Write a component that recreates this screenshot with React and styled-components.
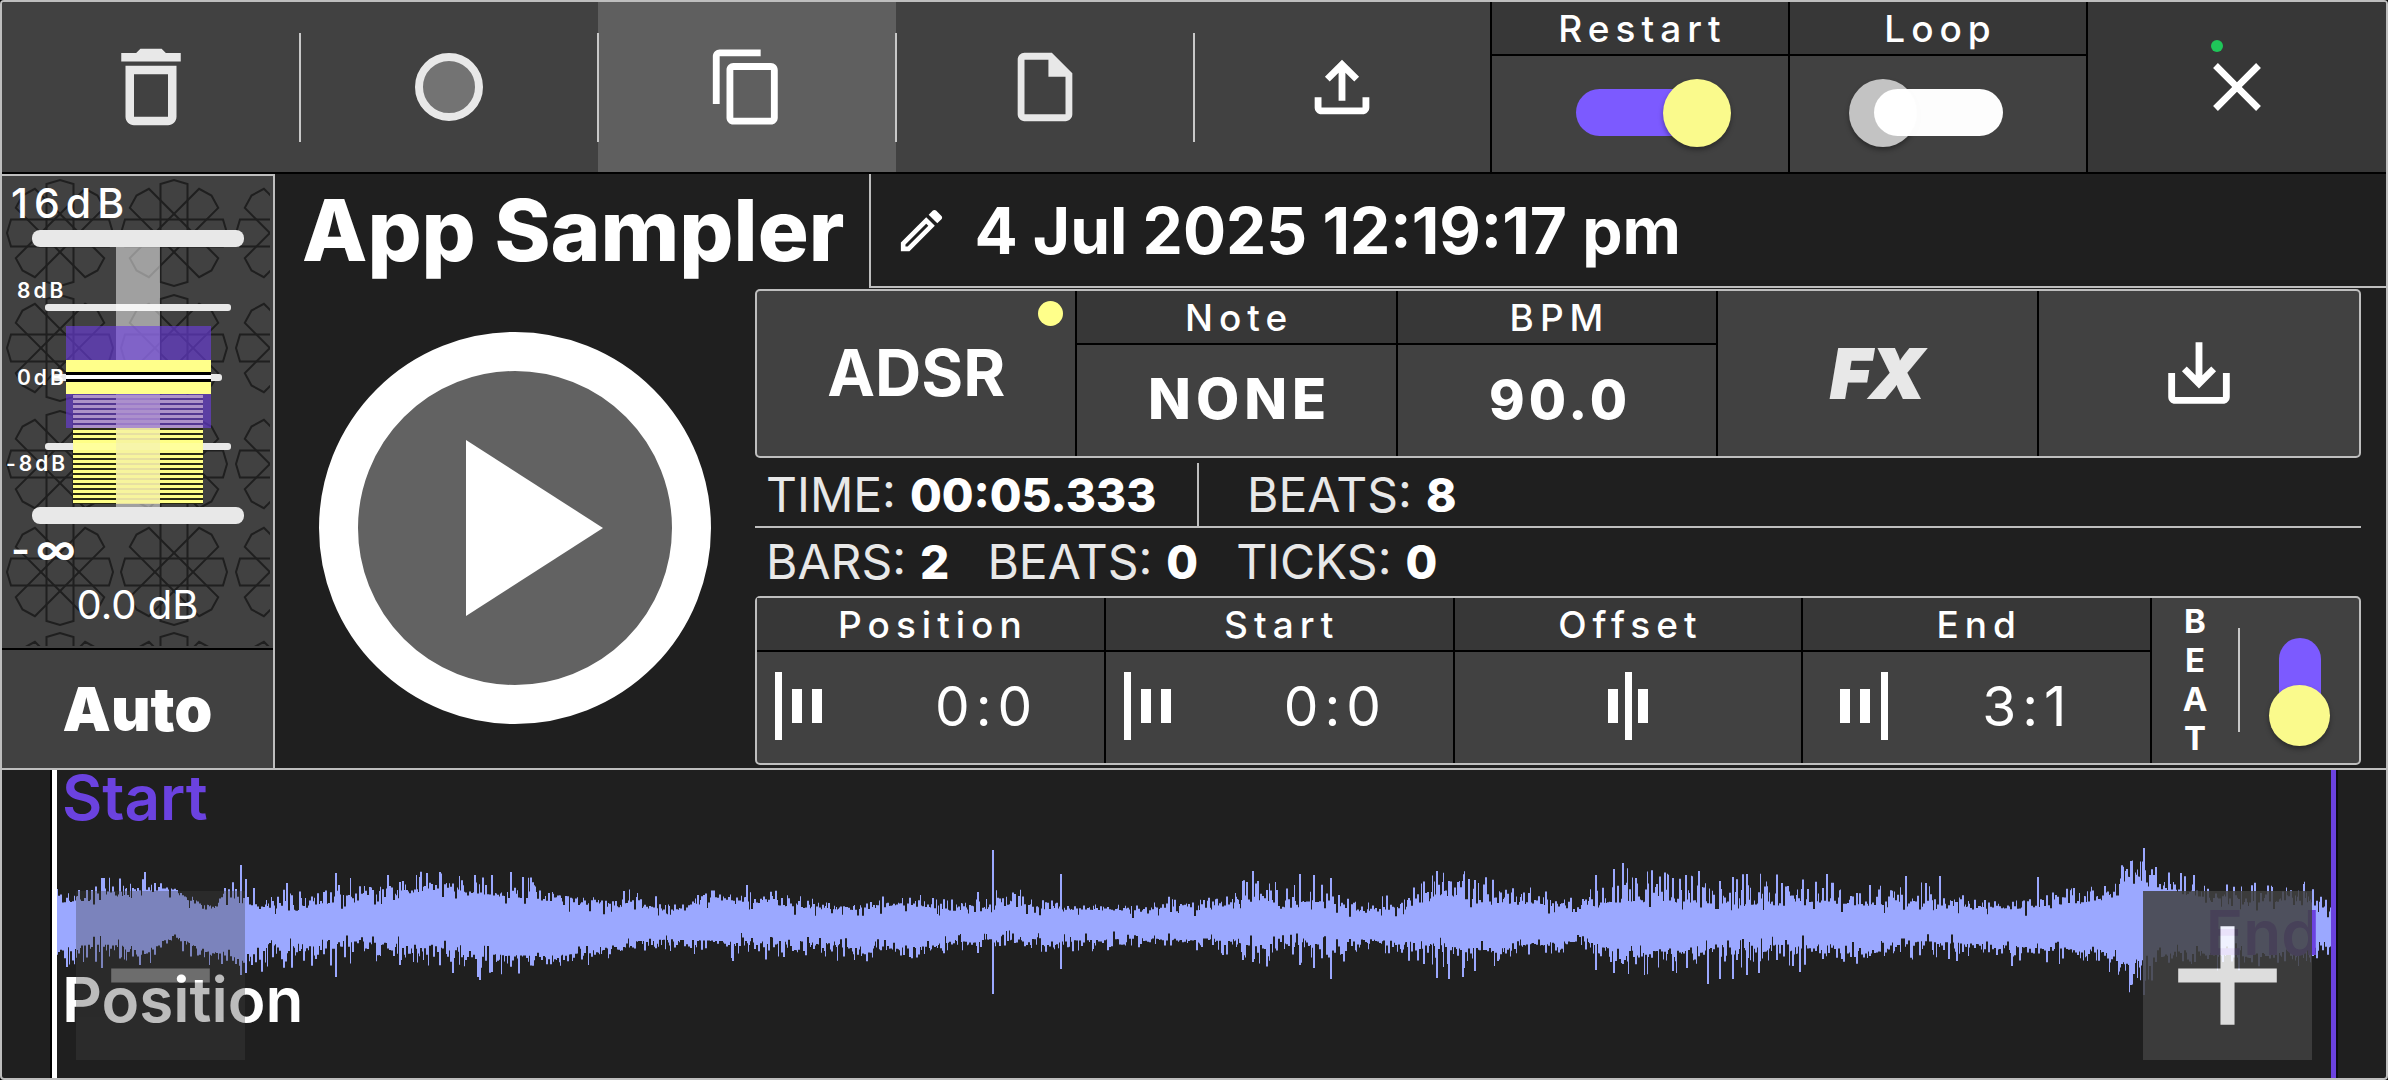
import React from "react";
import styled, { createGlobalStyle, css } from "styled-components";

const c = {
  bg: "#1f1f1f",
  cell: "#414141",
  head: "#373737",
  line: "#bebebe",
  soft: "#e8e8e8",
  purple: "#7c5aff",
  deep: "#6b42e0",
  yellow: "#fafa8c",
  wave: "#9ba8ff",
};

const Global = createGlobalStyle`
  *, *::before, *::after { box-sizing: border-box; }
  body {
    margin: 0;
    background: #000;
    color: #fff;
    font-family: Inter, "Liberation Sans", sans-serif;
  }
  button, input {
    margin: 0;
    padding: 0;
    border: 0;
    background: none;
    color: inherit;
    font-family: inherit;
  }
  svg { display: block; flex: none; }
`;

const Frame = styled.main`
  display: flex;
  flex-direction: column;
  min-height: 100vh;
  border: 2px solid ${c.line};
  border-radius: 4px;
  background: ${c.bg};
  overflow: hidden;
`;

/* ---------- toolbar ---------- */

const Toolbar = styled.header`
  display: grid;
  grid-template-columns: repeat(8, 1fr);
  height: 172px;
  background: ${c.cell};
  border-bottom: 2px solid #000;
`;

const ToolButton = styled.button`
  position: relative;
  display: flex;
  align-items: center;
  justify-content: center;
  background: ${(p) => (p.$active ? "#5f5f5f" : "transparent")};
  color: ${(p) => (p.$soft ? c.soft : "#fff")};
  border-right: ${(p) => (p.$edge ? "2px solid #000" : "0")};
  ${(p) =>
    p.$divided &&
    css`
      &::after {
        content: "";
        position: absolute;
        z-index: 1;
        right: -1px;
        top: 31px;
        bottom: 30px;
        width: 2px;
        background: #c8c8c8;
      }
    `}
`;

const CloseButton = styled(ToolButton)`
  background: ${c.head};
`;

const IconBadge = styled.span`
  position: relative;
  &::after {
    content: "";
    position: absolute;
    left: 15px;
    top: -6px;
    width: 12px;
    height: 12px;
    border-radius: 50%;
    background: #1fc659;
  }
`;

const Field = styled.div`
  position: relative;
  display: grid;
  grid-template-rows: 52px 1fr;
  min-width: 0;
  border-right: 2px solid #000;
`;

const FieldHead = styled.label`
  padding-left: 5px;
  background: ${c.head};
  font-size: 37px;
  font-weight: 500;
  line-height: 53px;
  letter-spacing: 6px;
  text-align: center;
`;

const FieldBody = styled.div`
  display: flex;
  align-items: center;
  justify-content: ${(p) => (p.$start ? "flex-start" : "center")};
  padding-left: ${(p) => p.$inset || 0}px;
  padding-bottom: 3px;
  min-width: 0;
  border-top: 2px solid #000;
  isolation: isolate;
`;

const Switch = styled.input`
  appearance: none;
  position: relative;
  width: 129px;
  height: 47px;
  border-radius: 24px;
  background: rgba(255, 255, 255, 0.99);
  &::before {
    content: "";
    position: absolute;
    z-index: -1;
    left: -25px;
    top: -10px;
    width: 68px;
    height: 68px;
    border-radius: 50%;
    background: #c3c3c3;
    box-shadow: 0 3px 5px rgba(0, 0, 0, 0.35);
  }
  &:checked {
    background: ${c.purple};
  }
  &:checked::before {
    z-index: 1;
    left: 87px;
    background: ${c.yellow};
  }
`;

const VerticalSwitch = styled(Switch)`
  width: 42px;
  height: 84px;
  &:checked::before {
    left: -10px;
    top: 47px;
    width: 61px;
    height: 61px;
  }
`;

/* ---------- middle ---------- */

const Middle = styled.section`
  display: grid;
  grid-template-columns: 273px 1fr;
  border-bottom: 2px solid ${c.line};
`;

const Side = styled.aside`
  display: flex;
  flex-direction: column;
  border-top: 2px solid ${c.line};
  border-right: 2px solid ${c.line};
  background: ${c.cell};
`;

const Meter = styled.div`
  position: relative;
  height: 472px;
`;

const MeterRange = styled.input`
  position: absolute;
  left: 30px;
  top: 54px;
  width: 212px;
  height: 294px;
  opacity: 0;
  writing-mode: vertical-lr;
  direction: rtl;
`;

const Mark = styled.span`
  position: absolute;
  left: ${(p) => (p.$far ? 4 : p.$big ? 9 : 15)}px;
  top: ${(p) => p.$y}px;
  font-size: ${(p) => (p.$big ? 41 : 21)}px;
  line-height: ${(p) => (p.$big ? 48 : 24)}px;
  font-weight: ${(p) => p.$weight || 600};
  letter-spacing: ${(p) => (p.$big ? 6 : 3)}px;
  white-space: nowrap;
`;

const MeterValue = styled.output`
  position: absolute;
  left: 0;
  right: 0;
  top: 405px;
  font-size: 40px;
  line-height: 48px;
  text-align: center;
`;

const AutoButton = styled.button`
  height: 120px;
  border-top: 2px solid #000;
  font-size: 61px;
  font-weight: 900;
`;

const Content = styled.div`
  display: flex;
  flex-direction: column;
  min-width: 0;
`;

const TitleRow = styled.div`
  display: flex;
  height: 114px;
`;

const AppTitle = styled.h1`
  margin: 0;
  padding: 0 25px 0 27px;
  font-size: 85px;
  line-height: 114px;
  font-weight: 800;
  white-space: nowrap;
`;

const NameButton = styled.button`
  display: flex;
  align-items: center;
  flex: 1;
  gap: 25px;
  padding-left: 23px;
  border-left: 2px solid ${c.line};
  border-bottom: 2px solid ${c.line};
  font-size: 64px;
  font-weight: 700;
  white-space: nowrap;
`;

const Deck = styled.div`
  display: grid;
  grid-template-columns: 480px 1fr;
  padding-right: 25px;
`;

const PlayArea = styled.div`
  display: flex;
  align-items: center;
  justify-content: center;
`;

const PlayButton = styled.button`
  display: flex;
  align-items: center;
  justify-content: center;
  width: 392px;
  height: 392px;
  border: 39px solid #fff;
  border-radius: 50%;
  background: #626262;
`;

const Controls = styled.div`
  padding: 1px 0 3px;
  min-width: 0;
`;

const Panel = styled.div`
  display: grid;
  grid-template-columns: ${(p) => p.$columns};
  height: 169px;
  border: 2px solid ${c.line};
  border-radius: 5px;
  background: ${c.cell};
`;

const PanelButton = styled.button`
  position: relative;
  display: flex;
  align-items: center;
  justify-content: center;
  padding-bottom: 2px;
  border-right: ${(p) => (p.$last ? "0" : "2px solid #000")};
  font-size: 64px;
  font-weight: 700;
`;

const ActiveDot = styled.i`
  position: absolute;
  right: 12px;
  top: 10px;
  width: 25px;
  height: 25px;
  border-radius: 50%;
  background: #ffff8a;
`;

const FxMark = styled.span`
  color: ${c.soft};
  font-size: 68px;
  font-style: italic;
  font-weight: 900;
  -webkit-text-stroke: 2px ${c.soft};
`;

const ValueButton = styled.button`
  width: 100%;
  height: 100%;
  padding-left: 6px;
  font-size: 56px;
  font-weight: 800;
  letter-spacing: 5px;
`;

const ValueInput = styled.input`
  width: 100%;
  min-width: 0;
  padding-left: 6px;
  font-size: 54px;
  font-weight: 800;
  letter-spacing: 4px;
  text-align: center;
`;

const PointInput = styled.input`
  flex: 1;
  min-width: 0;
  padding-left: ${(p) => p.$gap}px;
  font-size: 55px;
  font-weight: 400;
  letter-spacing: 6px;
`;

const InfoRow = styled.div`
  display: flex;
  align-items: center;
  gap: ${(p) => p.$gap || 0}px;
  height: ${(p) => p.$height}px;
  margin-top: ${(p) => p.$top || 0}px;
  padding-left: ${(p) => p.$inset || 0}px;
  border-bottom: ${(p) => (p.$ruled ? `2px solid ${c.line}` : "0")};
`;

const InfoSlot = styled.div`
  display: flex;
  align-items: center;
  height: 100%;
  width: ${(p) => (p.$wide ? "444px" : "auto")};
  padding-left: ${(p) => (p.$wide ? 11 : 48)}px;
  border-right: ${(p) => (p.$wide ? `2px solid ${c.line}` : "0")};
`;

const Info = styled.span`
  display: flex;
  align-items: baseline;
  gap: 14px;
  color: ${c.soft};
  font-size: 48px;
  line-height: 60px;
  white-space: nowrap;
  strong {
    color: #fff;
    font-size: 46px;
    font-weight: 800;
  }
`;

const BeatCell = styled.div`
  display: grid;
  grid-template-columns: 86px 1fr;
  align-items: center;
  padding-bottom: 2px;
`;

const BeatLabel = styled.label`
  display: flex;
  flex-direction: column;
  align-items: center;
  font-size: 33px;
  line-height: 39px;
  font-weight: 700;
`;

const BeatSwitch = styled.div`
  display: flex;
  align-items: center;
  justify-content: center;
  height: 104px;
  border-left: 2px solid #c8c8c8;
  isolation: isolate;
`;

/* ---------- waveform ---------- */

const WaveSection = styled.section`
  position: relative;
  flex: 1;
  display: flex;
  min-height: 308px;
  padding: 0 50px;
`;

const WaveTrack = styled.div`
  position: relative;
  flex: 1;
  min-width: 0;
  border-left: 5px solid #fff;
  border-right: 5px solid ${c.deep};
  box-shadow: -2px 0 #000, 2px 0 #0c0c14;
  svg {
    width: 100%;
    height: 308px;
  }
`;

const MarkerLabel = styled.span`
  position: absolute;
  font-size: 62px;
  line-height: 56px;
  font-weight: 600;
  color: ${c.deep};
`;

const StartLabel = styled(MarkerLabel)`
  left: 5px;
  top: 0;
`;

const PositionLabel = styled(MarkerLabel)`
  left: 5px;
  bottom: 50px;
  color: #fff;
`;

const EndLabel = styled(MarkerLabel)`
  right: 11px;
  bottom: 117px;
`;

const ZoomButton = styled.button`
  position: absolute;
  bottom: 18px;
  ${(p) => (p.$right ? "right: 74px;" : "left: 74px;")}
  width: 169px;
  height: 169px;
  background: ${c.cell};
  color: #fff;
  opacity: ${(p) => (p.$right ? 0.85 : 0.35)};
`;

/* ---------- drawings ---------- */

const paths = {
  trash:
    "M6 19c0 1.1.9 2 2 2h8c1.1 0 2-.9 2-2V7H6v12zM8 9h8v10H8V9zm7.5-5l-1-1h-5l-1 1H5v2h14V4h-3.5z",
  copy:
    "M16 1H4c-1.1 0-2 .9-2 2v14h2V3h12V1zm3 4H8c-1.1 0-2 .9-2 2v14c0 1.1.9 2 2 2h11c1.1 0 2-.9 2-2V7c0-1.1-.9-2-2-2zm0 16H8V7h11v14z",
  file:
    "M14 2H6c-1.1 0-1.99.9-1.99 2L4 20c0 1.1.89 2 1.99 2H18c1.1 0 2-.9 2-2V8l-6-6zM6 20V4h7v5h5v11H6z",
  upload:
    "M18 15v3H6v-3H4v3c0 1.1.9 2 2 2h12c1.1 0 2-.9 2-2v-3h-2zM7 9l1.41 1.41L11 7.83V16h2V7.83l2.59 2.58L17 9l-5-5-5 5z",
  close:
    "M19 6.41L17.59 5 12 10.59 6.41 5 5 6.41 10.59 12 5 17.59 6.41 19 12 13.41 17.59 19 19 17.59 13.41 12z",
  save:
    "M19 12v7H5v-7H3v7c0 1.1.9 2 2 2h14c1.1 0 2-.9 2-2v-7h-2zm-6 .67l2.59-2.58L17 11.5l-5 5-5-5 1.41-1.41L11 12.67V3h2z",
  edit:
    "M14.06 9.02l.92.92L5.92 19H5v-.92l9.06-9.06M17.66 3c-.25 0-.51.1-.7.29l-1.83 1.83 3.75 3.75 1.83-1.83c.39-.39.39-1.02 0-1.41l-2.34-2.34c-.2-.2-.45-.29-.71-.29zm-3.6 3.19L3 17.25V21h3.75L17.81 9.94l-3.75-3.75z",
  plus: "M19 13h-6v6h-2v-6H5v-2h6V5h2v6h6v2z",
  minus: "M19 13H5v-2h14v2z",
};

function Icon({ name, size = 82 }) {
  return (
    <svg width={size} height={size} viewBox="0 0 24 24" fill="currentColor" aria-hidden="true">
      <path d={paths[name]} />
    </svg>
  );
}

function RecordIcon() {
  return (
    <svg width="68" height="68" viewBox="0 0 68 68" aria-hidden="true">
      <circle cx="34" cy="34" r="30" fill="#737373" stroke={c.soft} strokeWidth="8" />
    </svg>
  );
}

/* One tall cursor line and two short bars; `bars` gives [x, width, tall]. */
function PointIcon({ bars }) {
  return (
    <svg width="48" height="68" viewBox="0 0 48 68" fill="#fff" aria-hidden="true">
      {bars.map(([x, w, tall]) => (
        <rect key={x} x={x} width={w} y={tall ? 0 : 17} height={tall ? 68 : 34} />
      ))}
    </svg>
  );
}

const lead = [[0, 7, true], [17, 10], [37, 10]];
const mid = [[4, 10], [21, 7, true], [34, 10]];
const tail = [[0, 10], [20, 10], [41, 7, true]];

const petal = "M-49 -13.5H49L53 0L49 13.5H-49L-53 0Z";

function MeterArt() {
  const rosettes = [];
  [58, 172, 287].forEach((x) =>
    [57, 172, 288, 396, 510].forEach((y) =>
      [0, 45, 90, 135].forEach((a) =>
        rosettes.push(
          <path key={`${x}-${y}-${a}`} d={petal} transform={`translate(${x} ${y}) rotate(${a})`} />
        )
      )
    )
  );
  const stripes = Array.from({ length: 22 }, (_, i) => 219 + i * 5);
  return (
    <svg width="271" height="472" viewBox="0 0 271 472" aria-hidden="true">
      <defs>
        <clipPath id="meter-clip">
          <rect width="268" height="470" />
        </clipPath>
      </defs>
      <g clipPath="url(#meter-clip)" fill="none" stroke="#1f1f1f" strokeWidth="2">
        {rosettes}
      </g>
      <g fill={c.soft}>
        <rect x="43" y="128" width="186" height="7" rx="3" />
        <rect x="51" y="198" width="169" height="7" rx="3" />
        <rect x="43" y="267" width="186" height="7" rx="3" />
      </g>
      <rect x="114" y="70" width="44" height="262" fill="#fff" opacity="0.5" />
      <rect x="71" y="219" width="130" height="109" fill="#2a2a12" />
      <rect x="114" y="219" width="44" height="109" fill="#e4dc8c" />
      <g fill="#ffff86">
        {stripes.map((y) => (
          <rect key={y} x="71" y={y} width="130" height="3" />
        ))}
      </g>
      <rect x="71" y="267" width="130" height="7" fill="#ffff9c" />
      <rect x="114" y="219" width="44" height="109" fill="#ece6c0" opacity="0.4" />
      <rect x="64" y="150" width="145" height="102" fill="#6c3ee0" opacity="0.62" />
      <g fill="#b49ad0" opacity="0.6">
        {stripes.slice(0, 7).map((y) => (
          <rect key={y} x="71" y={y} width="130" height="3" />
        ))}
      </g>
      <rect x="64" y="184" width="145" height="34" fill="#ffff8a" />
      <rect x="64" y="196" width="145" height="10" fill="#000" />
      <rect x="64" y="199" width="145" height="4" fill="#fff" />
      <g fill={c.soft}>
        <rect x="30" y="54" width="212" height="17" rx="8" />
        <rect x="30" y="331" width="212" height="17" rx="8" />
      </g>
    </svg>
  );
}

/* Envelope: x, then solid and peak height above and below the centre line. */
const envelope = [
  [57, 20, 32, 25, 37], [102, 23, 37, 20, 37], [150, 32, 40, 28, 36], [170, 33, 36, 12, 18],
  [204, 13, 20, 26, 37], [240, 20, 37, 36, 47], [275, 13, 30, 23, 37], [326, 20, 35, 23, 37],
  [357, 22, 38, 18, 32], [434, 33, 46, 23, 37], [470, 30, 40, 30, 47], [535, 23, 38, 33, 43],
  [586, 17, 22, 30, 38], [637, 15, 28, 18, 24], [673, 13, 18, 16, 24], [724, 23, 35, 18, 32],
  [800, 15, 23, 18, 30], [851, 13, 18, 22, 32], [912, 18, 27, 25, 34], [953, 12, 19, 18, 24],
  [1014, 18, 32, 15, 24], [1065, 13, 18, 18, 25], [1147, 12, 16, 15, 22], [1177, 17, 25, 17, 24],
  [1208, 13, 22, 15, 24], [1254, 22, 40, 21, 37], [1290, 21, 32, 18, 32], [1320, 21, 40, 21, 38],
  [1366, 10, 16, 16, 27], [1422, 18, 35, 20, 32], [1463, 24, 44, 25, 40], [1504, 19, 35, 25, 37],
  [1534, 19, 31, 20, 27], [1580, 13, 21, 18, 27], [1600, 18, 35, 20, 33], [1625, 21, 43, 28, 43],
  [1700, 20, 38, 23, 41], [1746, 18, 40, 23, 43], [1811, 21, 40, 20, 34], [1861, 17, 31, 28, 43],
  [1922, 19, 35, 18, 30], [2002, 13, 21, 22, 34], [2052, 17, 30, 25, 35], [2103, 23, 34, 28, 38],
  [2130, 45, 60, 42, 60], [2148, 40, 54, 33, 50], [2178, 29, 41, 28, 41], [2253, 20, 36, 28, 41],
  [2304, 22, 34, 28, 40], [2324, 13, 21, 16, 24], [2332, 14, 22, 18, 30],
];

const spikes = [
  [101, 45, 45], [144, 51, 0], [240, 58, 52], [245, 44, 50], [286, 40, 0], [335, 50, 54],
  [439, 51, 0], [474, 48, 0], [479, 0, 57], [491, 48, 49], [510, 51, 0], [522, 46, 0],
  [732, 0, 38], [746, 38, 0], [977, 31, 30], [992, 73, 71], [1060, 49, 46], [1242, 42, 37],
  [1252, 52, 39], [1299, 49, 42], [1313, 48, 45], [1330, 45, 56], [1423, 39, 41], [1436, 52, 55],
  [1448, 42, 56], [1462, 42, 54], [1474, 43, 48], [1595, 48, 47], [1613, 54, 50], [1622, 60, 41],
  [1672, 45, 48], [1685, 48, 0], [1698, 52, 0], [1707, 0, 61], [1719, 42, 56], [1732, 46, 56],
  [1746, 49, 52], [1799, 0, 49], [1826, 49, 0], [1905, 47, 0], [1939, 47, 0], [2011, 0, 43],
  [2037, 46, 0], [2130, 62, 62], [2143, 75, 72], [2155, 56, 0], [2168, 50, 0], [2180, 50, 0],
  [2193, 48, 0],
];

function buildWave() {
  let seed = 7;
  const rnd = () => {
    seed = (seed * 16807) % 2147483647;
    return seed / 2147483647;
  };
  const reach = (solid, peak) => {
    const r = rnd();
    if (r < 0.12) return solid - rnd() * 8;
    if (r > 0.89) return peak + rnd() * (peak - solid) * 0.6;
    return solid + (peak - solid) * Math.pow(rnd(), 1.8);
  };
  const centre = 153;
  let d = "";
  let k = 0;
  let x = 57;
  while (x < 2331) {
    while (k < envelope.length - 2 && envelope[k + 1][0] <= x) k += 1;
    const a = envelope[k];
    const b = envelope[k + 1];
    const t = (x - a[0]) / (b[0] - a[0]);
    const [, t0, t1, b0, b1] = a.map((v, i) => v + (b[i] - v) * t);
    const w = rnd() < 0.5 ? 1 : 2;
    const up = reach(t0, t1);
    const down = reach(b0, b1);
    d += `M${x - 57} ${(centre - up).toFixed(1)}h${w}V${(centre + down).toFixed(1)}h-${w}z`;
    x += w;
  }
  spikes.forEach(([sx, up, down]) => {
    d += `M${sx - 57} ${centre - up}h2V${centre + down}h-2z`;
  });
  return d;
}

const wavePath = buildWave();

/* ---------- page ---------- */

function PointField({ id, label, value, bars, inset, gap }) {
  return (
    <Field>
      <FieldHead htmlFor={id}>{label}</FieldHead>
      <FieldBody $start $inset={inset}>
        <PointIcon bars={bars} />
        <PointInput id={id} defaultValue={value} $gap={gap} />
      </FieldBody>
    </Field>
  );
}

export default function App() {
  return (
    <>
      <Global />
      <Frame>
        <Toolbar>
          <ToolButton $soft $divided aria-label="Delete"><Icon name="trash" size={102} /></ToolButton>
          <ToolButton $divided aria-label="Record"><RecordIcon /></ToolButton>
          <ToolButton $active $divided aria-label="Copy"><Icon name="copy" /></ToolButton>
          <ToolButton $soft $divided aria-label="New file"><Icon name="file" /></ToolButton>
          <ToolButton $edge aria-label="Upload"><Icon name="upload" /></ToolButton>
          <Field>
            <FieldHead htmlFor="restart">Restart</FieldHead>
            <FieldBody><Switch id="restart" type="checkbox" defaultChecked /></FieldBody>
          </Field>
          <Field>
            <FieldHead htmlFor="loop">Loop</FieldHead>
            <FieldBody><Switch id="loop" type="checkbox" /></FieldBody>
          </Field>
          <CloseButton aria-label="Close"><IconBadge><Icon name="close" /></IconBadge></CloseButton>
        </Toolbar>

        <Middle>
          <Side>
            <Meter>
              <MeterArt />
              <Mark $big $weight={500} $y={3}>16dB</Mark>
              <Mark $y={103}>8dB</Mark>
              <Mark $y={190}>0dB</Mark>
              <Mark $far $y={276}>-8dB</Mark>
              <Mark $big $weight={600} $y={349}>-∞</Mark>
              <MeterRange type="range" min="-60" max="16" defaultValue="0" aria-label="Volume" />
              <MeterValue>0.0 dB</MeterValue>
            </Meter>
            <AutoButton>Auto</AutoButton>
          </Side>

          <Content>
            <TitleRow>
              <AppTitle>App Sampler</AppTitle>
              <NameButton>
                <Icon name="edit" size={55} />
                4 Jul 2025 12:19:17 pm
              </NameButton>
            </TitleRow>

            <Deck>
              <PlayArea>
                <PlayButton aria-label="Play">
                  <svg width="314" height="314" viewBox="0 0 314 314" aria-hidden="true">
                    <path d="M108 69L245 157L108 245Z" fill="#fff" />
                  </svg>
                </PlayButton>
              </PlayArea>

              <Controls>
                <Panel $columns="repeat(5, 1fr)">
                  <PanelButton>
                    ADSR
                    <ActiveDot />
                  </PanelButton>
                  <Field>
                    <FieldHead htmlFor="note">Note</FieldHead>
                    <FieldBody><ValueButton id="note">NONE</ValueButton></FieldBody>
                  </Field>
                  <Field>
                    <FieldHead htmlFor="bpm">BPM</FieldHead>
                    <FieldBody><ValueInput id="bpm" defaultValue="90.0" /></FieldBody>
                  </Field>
                  <PanelButton><FxMark>FX</FxMark></PanelButton>
                  <PanelButton $last aria-label="Save"><Icon name="save" /></PanelButton>
                </Panel>

                <InfoRow $ruled $top={5} $height={65}>
                  <InfoSlot $wide><Info>TIME: <strong>00:05.333</strong></Info></InfoSlot>
                  <InfoSlot><Info>BEATS: <strong>8</strong></Info></InfoSlot>
                </InfoRow>
                <InfoRow $height={68} $inset={11} $gap={38}>
                  <Info>BARS: <strong>2</strong></Info>
                  <Info>BEATS: <strong>0</strong></Info>
                  <Info>TICKS: <strong>0</strong></Info>
                </InfoRow>

                <Panel $columns="repeat(4, 1fr) 207px">
                  <PointField id="position" label="Position" value="0:0" bars={lead} inset={18} gap={112} />
                  <PointField id="start" label="Start" value="0:0" bars={lead} inset={18} gap={112} />
                  <Field>
                    <FieldHead as="span">Offset</FieldHead>
                    <FieldBody><PointIcon bars={mid} /></FieldBody>
                  </Field>
                  <PointField id="end" label="End" value="3:1" bars={tail} inset={37} gap={94} />
                  <BeatCell>
                    <BeatLabel htmlFor="beat">
                      <span>B</span>
                      <span>E</span>
                      <span>A</span>
                      <span>T</span>
                    </BeatLabel>
                    <BeatSwitch><VerticalSwitch id="beat" type="checkbox" defaultChecked /></BeatSwitch>
                  </BeatCell>
                </Panel>
              </Controls>
            </Deck>
          </Content>
        </Middle>

        <WaveSection>
          <WaveTrack>
            <svg viewBox="0 0 2274 308" preserveAspectRatio="none" aria-hidden="true">
              <path d={wavePath} fill={c.wave} />
            </svg>
            <StartLabel>Start</StartLabel>
            <PositionLabel>Position</PositionLabel>
            <EndLabel>End</EndLabel>
          </WaveTrack>
          <ZoomButton aria-label="Zoom out"><Icon name="minus" size={169} /></ZoomButton>
          <ZoomButton $right aria-label="Zoom in"><Icon name="plus" size={169} /></ZoomButton>
        </WaveSection>
      </Frame>
    </>
  );
}
